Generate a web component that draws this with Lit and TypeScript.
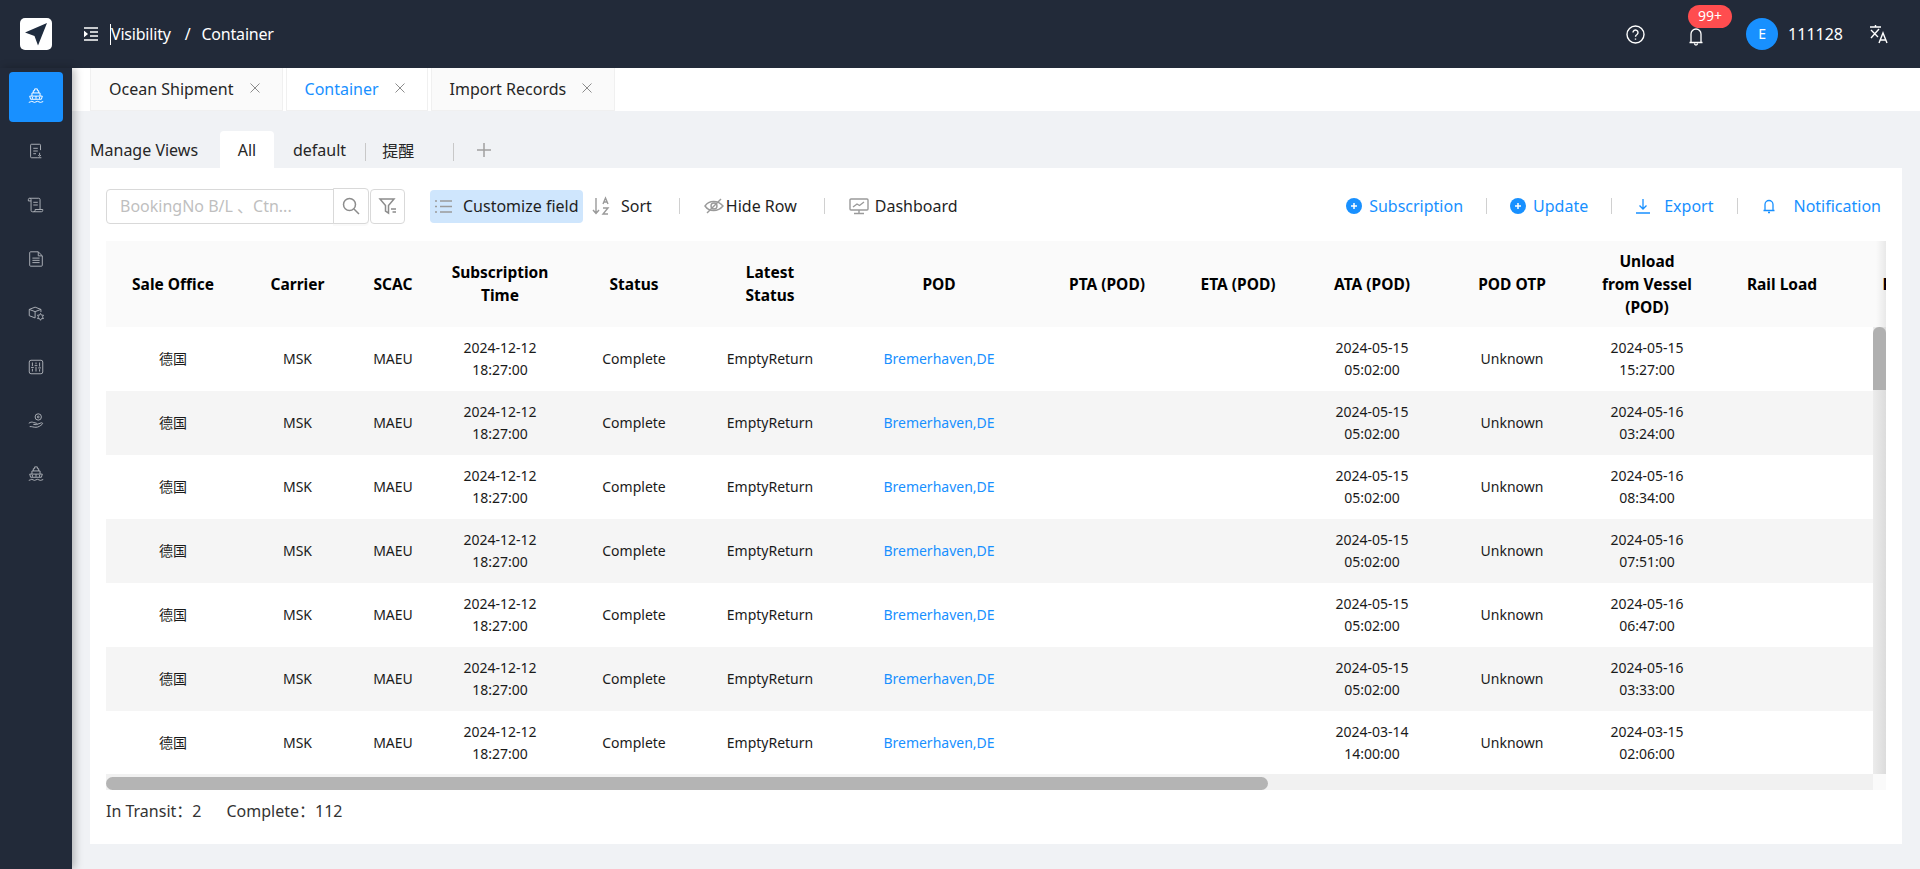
import { LitElement, html, css, svg } from "lit";
import { customElement } from "lit/decorators.js";

const ship = svg`<path d="M7 5.5V3h1.5V1h3v2H13v2.5M5.5 9V5.5h9V9M3 9h14l-1 3.5M4 12.5 3 9M2 16c1.5 0 2-1.2 3.3-1.2S7 16 8.3 16s1.9-1.2 3.3-1.2 2 1.2 3.3 1.2 1.8-.8 3.1-1M6 12v-2M10 12V9M14 12v-2M4 12.5h12" />`;
const sideIcons = [
  ship,
  svg`<path d="M15 9V3.5a1 1 0 0 0-1-1H5a1 1 0 0 0-1 1v13a1 1 0 0 0 1 1h7M7 7h5M7 10h5M7 13h3M14 12v3M12.5 14.5l1.5 1.5 1.5-1.5M12 17.5h4"/>`,
  svg`<path d="M3 2.5h10a1.5 1.5 0 0 1 1.500 1.500V15.500M3 2.500A1.500 1.500 0 0 0 1.500 4v1.500H4.500M3 2.500A1.500 1.500 0 0 1 4.500 4v12a1.500 1.500 0 0 0 1.500 1.500h10a1.500 1.500 0 0 0 1.500-1.500v-1H9v1a1.500 1.500 0 0 1-1.500 1.500M7 7h5M7 10h5"/>`,
  svg`<path d="M12.500 2H4a1 1 0 0 0-1 1v14a1 1 0 0 0 1 1h12a1 1 0 0 0 1-1V6.500zM12.500 2v4.500H17M6 9h8M6 11.500h8M6 14h8"/>`,
  svg`<path d="M9 15.500 2.500 13V6L9 3.500 15.500 6v3M2.500 6 9 8.500 15.500 6M9 8.500v7M15 10.500l1.100 1.900h2.200l-1.100 1.900 1.100 1.900h-2.200L15 18.100l-1.100-1.900h-2.200l1.100-1.900-1.100-1.900h2.200z"/>`,
  svg`<rect x="2.500" y="2.500" width="15" height="15" rx="2"/><path d="M6 5v4M6 12v3M4.500 10.500h3M10 5v2M10 10v5M8.500 8.500h3M14 5v4.500M14 12.500V15M12.500 11h3"/>`,
  svg`<circle cx="12.500" cy="5.500" r="3.500"/><circle cx="12.500" cy="5.500" r="1"/><path d="M2 12.500c2-1.500 3.500-1.500 5.500-.8l3 .8c1 .4.800 1.700-.4 1.600L7 13.700M11 13.800l5-1.800c1.200-.3 1.800.8.900 1.600C15 15.300 12.500 17 10 17c-3 0-4.500-1-7-.8"/>`,
  ship,
];
const closeX = html`<svg class="x" viewBox="0 0 10 10"><path d="M.5.500l9 9M9.500.500l-9 9"/></svg>`;
const plusDot = html`<svg class="act-ic" viewBox="0 0 16 16"><circle cx="8" cy="8" r="8" fill="#1890ff"/><path d="M8 5v6M5 8h6" stroke="#fff" stroke-width="1.500"/></svg>`;

const cols = ["Sale Office", "Carrier", "SCAC", "Subscription Time", "Status", "Latest Status", "POD", "PTA (POD)", "ETA  (POD)", "ATA  (POD)", "POD OTP", "Unload from Vessel (POD)", "Rail Load", "Rail Unload"];
const rows = [
  ["2024-05-15", "05:02:00", "2024-05-15", "15:27:00"],
  ["2024-05-15", "05:02:00", "2024-05-16", "03:24:00"],
  ["2024-05-15", "05:02:00", "2024-05-16", "08:34:00"],
  ["2024-05-15", "05:02:00", "2024-05-16", "07:51:00"],
  ["2024-05-15", "05:02:00", "2024-05-16", "06:47:00"],
  ["2024-05-15", "05:02:00", "2024-05-16", "03:33:00"],
  ["2024-03-14", "14:00:00", "2024-03-15", "02:06:00"],
  ["2024-03-14", "14:00:00", "2024-03-15", "02:06:00"],
];

@customElement("app-root")
export class AppRoot extends LitElement {
  static styles = css`
    :host { display: block; height: 869px; overflow: hidden; background: #f0f2f5; color: #000; font-family: "Noto Sans", "Noto Sans CJK SC", sans-serif; font-size: 16px; }
    * { box-sizing: border-box; }
    svg { display: block; flex: none; fill: none; }

    .top { height: 68px; background: #222a39; color: #fff; display: flex; align-items: center; }
    .logo { width: 32px; height: 32px; margin-left: 20px; background: #fff; border-radius: 5px; display: flex; align-items: center; justify-content: center; }
    .logo svg { width: 26px; height: 26px; }
    .fold { width: 14px; height: 14px; margin-left: 32px; stroke: #fff; stroke-width: 1.300; }
    .crumb { margin-left: 12px; border-left: 1px solid #fff; height: 21px; line-height: 21px; display: flex; white-space: pre; letter-spacing: -.2px; }
    .crumb .sl { margin: 0 11px 0 14px; }
    .top-right { margin-left: auto; display: flex; align-items: center; }
    .help { width: 19px; height: 19px; stroke: #fff; stroke-width: 1.400; }
    .bell-wrap { position: relative; margin-left: 44px; }
    .bell-wrap svg { width: 14px; height: 20px; margin-top: 6px; stroke: #fff; stroke-width: 1.300; }
    .badge { position: absolute; left: -1px; top: -16px; width: 44px; height: 23px; border-radius: 12px; background: #ff4d4f; font-size: 14px; line-height: 22px; text-align: center; }
    .avatar { width: 32px; height: 32px; border-radius: 50%; background: #1890ff; margin-left: 43px; text-align: center; line-height: 32px; font-size: 14px; }
    .user { margin-left: 10px; font-size: 16px; }
    .lang { width: 20px; height: 20px; margin: 0 31px 0 26px; stroke: #fff; stroke-width: 1.400; }

    .body { display: flex; height: 801px; }
    .side { width: 72px; flex: none; background: #222a39; padding: 4px 9px 0; box-shadow: 3px 0 8px rgba(0, 0, 0, .25); position: relative; }
    .side-item { height: 50px; margin-bottom: 4px; border-radius: 4px; display: flex; align-items: center; justify-content: center; }
    .side-item.on { background: #1890ff; }
    .side-item svg { width: 18px; height: 18px; stroke: #a9adb4; stroke-width: 1.100; }
    .side-item.on svg { stroke: #fff; }

    .main { flex: 1; min-width: 0; }
    .tabs { height: 43px; background: #fff; padding-left: 18px; display: flex; gap: 3px; }
    .tab { height: 43px; background: #fafafa; border: 1px solid #f0f0f0; border-top: 0; padding-left: 18px; display: flex; align-items: center; color: #262626; }
    .tab.on { background: #fff; color: #1890ff; }
    .x { width: 10px; height: 10px; margin: 0 22px 2px 16px; stroke: #8c8c8c; stroke-width: 1; }

    .views { height: 57px; padding: 20px 0 0 18px; display: flex; align-items: stretch; }
    .v { height: 37px; display: flex; align-items: center; color: #262626; }
    .v.mv { width: 130px; padding-left: 0; }
    .v.all { width: 54px; justify-content: center; background: #fff; border-radius: 4px 4px 0 0; }
    .v.def { margin-left: 19px; }
    .v-sep { width: 1px; height: 18px; margin-top: 12px; background: #c8c8c8; }
    .v.rem { margin-left: 16px; font-size: 16px; }
    .plus { width: 14px; height: 14px; margin: 12px 0 0 23px; stroke: #a0a0a0; stroke-width: 1.500; }

    .card { margin: 0 18px; height: 676px; background: #fff; padding: 0 16px; }
    .bar { height: 73px; display: flex; align-items: center; padding: 3px 5px 0 0; white-space: nowrap; color: #1f1f1f; }
    .input { width: 228px; height: 35px; border: 1px solid #d9d9d9; border-radius: 4px 0 0 4px; padding-left: 13px; line-height: 33px; color: #bfbfbf; font-size: 16px; }
    .btn { width: 36px; height: 36px; border: 1px solid #d9d9d9; display: flex; align-items: center; justify-content: center; background: #fff; margin-left: -1px; }
    .btn.s { border-radius: 0 4px 4px 0; box-shadow: 0 2px 0 rgba(0, 0, 0, .02); }
    .btn.f { width: 35px; height: 35px; border-radius: 4px; margin-left: 1px; }
    .btn svg { width: 20px; height: 20px; stroke: #8c8c8c; stroke-width: 1.500; }
    .cust { margin-left: 25px; width: 153px; height: 33px; border-radius: 4px; background: #cfe6fd; padding-left: 5px; display: flex; align-items: center; gap: 11px; }
    .ic { width: 20px; height: 20px; stroke: #9a9a9a; stroke-width: 1.400; }
    .cust .ic { width: 17px; height: 17px; }
    .sort { margin-left: 9px; display: flex; align-items: center; gap: 11px; }
    .sort .ic { width: 18px; height: 20px; }
    .sep { width: 1px; height: 16px; background: #d0d0d0; margin: 0 24px 0 27px; }
    .t { display: flex; align-items: center; gap: 2px; }
    .t.d { gap: 6px; }
    .act { display: flex; align-items: center; gap: 7px; color: #1890ff; }
    .act.w { gap: 13px; }
    .act-ic { width: 16px; height: 16px; }
    .act .ln { width: 16px; height: 16px; stroke: #1890ff; stroke-width: 1.300; }
    .right { margin-left: auto; display: flex; align-items: center; }

    .table { width: 1780px; height: 549px; overflow: hidden; }
    .row { display: grid; grid-template-columns: 134px 115px 76px 138px 130px 142px 196px 140px 122px 146px 134px 136px 134px 155px; }
    .head { width: 1780px; height: 86px; overflow: hidden; background: #fafafa; position: relative; }
    .head .row { height: 86px; }
    .head .cell { font-weight: 700; font-size: 15.500px; line-height: 23px; padding: 0 22px; color: #000; white-space: pre-line; }
    .shade { position: absolute; right: 0; top: 0; bottom: 0; width: 10px; background: linear-gradient(to right, rgba(0, 0, 0, 0), rgba(0, 0, 0, .07)); }
    .cell { display: flex; align-items: center; justify-content: center; text-align: center; font-size: 14px; line-height: 22px; color: #1a1a1a; }
    .tbody { display: flex; height: 447px; }
    .rows { width: 1767px; overflow: hidden; }
    .rows .row { height: 64px; }
    .rows .row:nth-child(even) { background: #f5f5f5; }
    .link { color: #1890ff; }
    .vbar { width: 13px; background: linear-gradient(to right, #ececec, #dcdcdc); }
    .vthumb { height: 63px; background: #b0b0b0; border-radius: 6px 6px 0 0; }
    .hbar { height: 16px; width: 1780px; display: flex; background: #f1f1f1; }
    .htrack { width: 1767px; padding-top: 3px; }
    .hthumb { width: 1162px; height: 13px; border-radius: 7px; background: #b4b4b4; }
    .corner { width: 13px; background: #fafafa; }
    .foot { padding-top: 9px; height: 32px; color: #333; display: flex; gap: 25px; line-height: 24px; white-space: pre; }
  `;

  render() {
    return html`
      <div class="top">
        <div class="logo"><svg viewBox="0 0 26 26"><path d="M24 2 2 11.500l9.500 3.500 3.500 9.500z" fill="#1f2c3f"/></svg></div>
        <svg class="fold" viewBox="0 0 14 14"><path d="M0 1h14M6 5h8M6 9h8M0 13h14"/><path d="M0 4.500 3 7 0 9.500z" fill="#fff"/></svg>
        <div class="crumb"><span>Visibility</span><span class="sl">/</span><span>Container</span></div>
        <div class="top-right">
          <svg class="help" viewBox="0 0 19 19"><circle cx="9.500" cy="9.500" r="8.500"/><path d="M7 7.500a2.500 2.500 0 1 1 4 2c-1 .7-1.500 1.200-1.500 2.300"/><path d="M9.500 13.500v1.200"/></svg>
          <div class="bell-wrap">
            <svg viewBox="0 0 14 20"><path d="M2 15V7a5 5 0 0 1 10 0v8M.5 15.500h13M5.500 16.500c0 2 3 2 3 0"/></svg>
            <span class="badge">99+</span>
          </div>
          <div class="avatar">E</div>
          <div class="user">111128</div>
          <svg class="lang" viewBox="0 0 20 20"><path d="M1 3h11M6.500 1v2M2 6l7 7M10 5l-8 9M10 19l4-10 4 10M11.500 16h5"/></svg>
        </div>
      </div>
      <div class="body">
        <div class="side">
          ${sideIcons.map((p, i) => html`<div class="side-item ${i === 0 ? "on" : ""}"><svg viewBox="0 0 20 20">${p}</svg></div>`)}
        </div>
        <div class="main">
          <div class="tabs">
            <div class="tab">Ocean Shipment${closeX}</div>
            <div class="tab on">Container${closeX}</div>
            <div class="tab">Import Records${closeX}</div>
          </div>
          <div class="views">
            <div class="v mv">Manage Views</div>
            <div class="v all">All</div>
            <div class="v def">default</div>
            <div class="v-sep" style="margin-left:19px"></div>
            <div class="v rem">提醒</div>
            <div class="v-sep" style="margin-left:39px"></div>
            <svg class="plus" viewBox="0 0 14 14"><path d="M7 0v14M0 7h14"/></svg>
          </div>
          <div class="card">
            <div class="bar">
              <div class="input">BookingNo B/L 、Ctn...</div>
              <div class="btn s"><svg viewBox="0 0 20 20"><circle cx="8.500" cy="8.500" r="6"/><path d="m13 13 5 5"/></svg></div>
              <div class="btn f"><svg viewBox="0 0 20 20"><path d="M2 3h14l-5.500 6.500V17l-3-2V9.500zM13 13h5M14.500 16H18"/></svg></div>
              <div class="cust">
                <svg class="ic" viewBox="0 0 17 17"><path d="M5 3h12M5 8.500h12M5 14h12M0 3h2M0 8.500h2M0 14h2"/></svg>
                <span>Customize field</span>
              </div>
              <div class="sort">
                <svg class="ic" viewBox="0 0 18 20"><path d="M4 2v15M1 14l3 3.500L7 14M11 8l2.500-6L16 8M12 6h3M11 12h5l-5 6h5"/></svg>
                <span>Sort</span>
              </div>
              <div class="sep"></div>
              <div class="t">
                <svg class="ic" viewBox="0 0 20 20"><path d="M1 10c4-6 13-6 18 0-5 6-14 6-18 0z"/><circle cx="10" cy="10" r="3"/><path d="M3 17 17 3"/></svg>
                <span>Hide Row</span>
              </div>
              <div class="sep"></div>
              <div class="t d">
                <svg class="ic" viewBox="0 0 20 20"><rect x="1" y="3" width="18" height="11" rx="1"/><path d="M10 14v3M5 17.500h10M4 11l4-3 2.500 1.500L15 6"/></svg>
                <span>Dashboard</span>
              </div>
              <div class="right">
                <div class="act">${plusDot}<span>Subscription</span></div>
                <div class="sep" style="margin:0 23px"></div>
                <div class="act">${plusDot}<span>Update</span></div>
                <div class="sep" style="margin:0 23px"></div>
                <div class="act w"><svg class="ln" viewBox="0 0 16 16"><path d="M8 1v10M4.500 7.500 8 11l3.500-3.500M1 15h14"/></svg><span>Export</span></div>
                <div class="sep" style="margin:0 23px 0 24px"></div>
                <div class="act w" style="gap:16px"><svg class="ln" viewBox="0 0 16 16"><path d="M4 12V6.500a4 4 0 0 1 8 0V12M2.500 12.500h11M7 14.500h2"/></svg><span>Notification</span></div>
              </div>
            </div>
            <div class="table">
              <div class="head">
                <div class="row">${cols.map((c) => html`<div class="cell">${c}</div>`)}</div>
                <div class="shade"></div>
              </div>
              <div class="tbody">
                <div class="rows">
                  ${rows.map((r) => html`<div class="row">
                    <div class="cell">德国</div>
                    <div class="cell">MSK</div>
                    <div class="cell">MAEU</div>
                    <div class="cell">2024-12-12<br />18:27:00</div>
                    <div class="cell">Complete</div>
                    <div class="cell">EmptyReturn</div>
                    <div class="cell link">Bremerhaven,DE</div>
                    <div class="cell"></div>
                    <div class="cell"></div>
                    <div class="cell">${r[0]}<br />${r[1]}</div>
                    <div class="cell">Unknown</div>
                    <div class="cell">${r[2]}<br />${r[3]}</div>
                    <div class="cell"></div>
                    <div class="cell"></div>
                  </div>`)}
                </div>
                <div class="vbar"><div class="vthumb"></div></div>
              </div>
              <div class="hbar"><div class="htrack"><div class="hthumb"></div></div><div class="corner"></div></div>
            </div>
            <div class="foot"><span>In Transit：2</span><span>Complete：112</span></div>
          </div>
        </div>
      </div>
    `;
  }
}
